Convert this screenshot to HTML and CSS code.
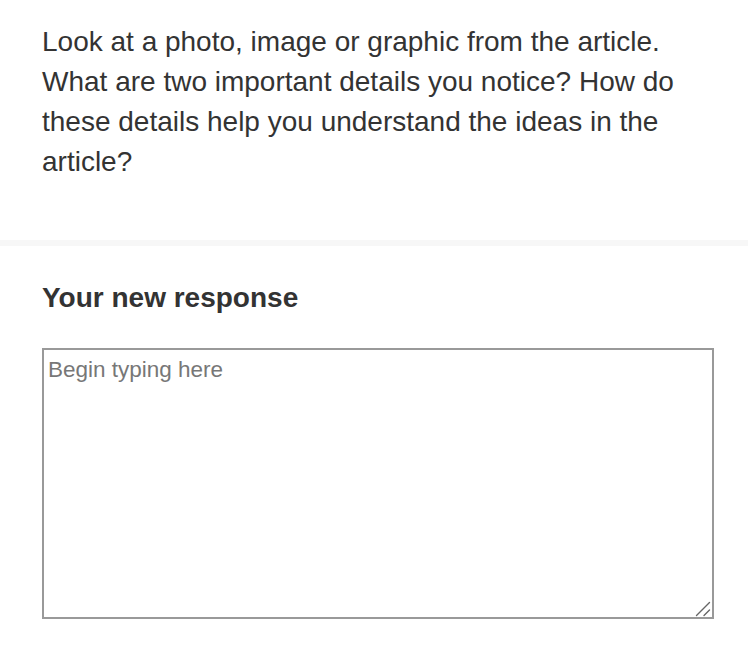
FILE: index.html
```html
<!DOCTYPE html>
<html>
<head>
<meta charset="utf-8">
<link rel="stylesheet" href="styles.css">
</head>
<body>
<section class="prompt">
<p>Look at a photo, image or graphic from the article. What are two important details you notice? How do these details help you understand the ideas in the article?</p>
</section>
<div class="divider"></div>
<section class="response">
<h2>Your new response</h2>
<div class="field">
<textarea class="box" placeholder="Begin typing here"></textarea>
<svg class="grip" width="16" height="16" viewBox="0 0 16 16"><path d="M1.5 14.5 L14.5 1.5 M9 14.5 L14.5 9" stroke="#666" stroke-width="1.4" stroke-linecap="round" fill="none"/></svg>
</div>
</section>
</body>
</html>
```
FILE: styles.css
```css
html, body { margin: 0; padding: 0; background: #fff; }
body { font-family: "Liberation Sans", Arial, sans-serif; color: #333; }
.prompt { padding: 22px 42px 0 42px; height: 240px; box-sizing: border-box; }
.prompt p { margin: 0; font-size: 28px; line-height: 40px; }
.divider { height: 6px; background: #f7f7f7; }
.response { padding: 36px 34px 0 42px; }
.response h2 { margin: 0 0 34px 0; font-size: 28px; font-weight: bold; line-height: 32px; }
.field { position: relative; width: 672px; }
.box { display: block; width: 672px; height: 271px; box-sizing: border-box; border: 2px solid #999; padding: 7px 4px; font-family: "Liberation Sans", Arial, sans-serif; font-size: 22.5px; line-height: 26px; color: #333; resize: none; margin: 0; outline: none; }
.box::placeholder { color: #777; }
.grip { position: absolute; right: 3px; bottom: 2px; pointer-events: none; }
```
